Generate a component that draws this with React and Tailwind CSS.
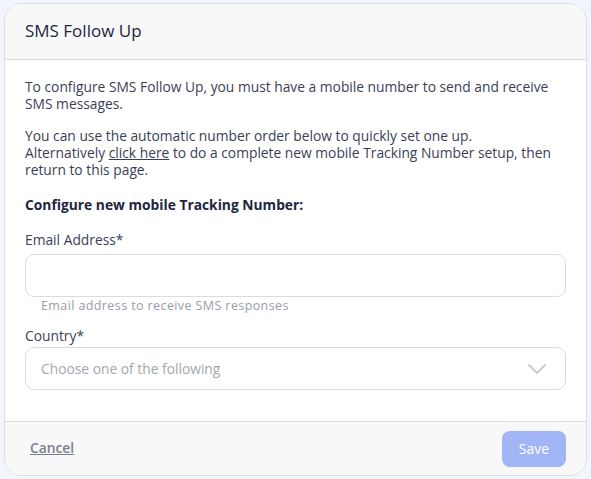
import React from "react";

function ChevronDown() {
  return (
    <svg width="20" height="12" viewBox="0 0 20 12" fill="none">
      <path d="M2 2l8 8 8-8" stroke="#c7c9cf" strokeWidth="1.8" strokeLinecap="round" strokeLinejoin="round" />
    </svg>
  );
}

export default function App() {
  return (
    <div className="w-[591px] h-[479px] bg-[#f2f5fb] pt-[3px] pl-[4px]" style={{ fontFamily: "'Open Sans', 'Liberation Sans', sans-serif" }}>
      <div className="w-[583px] h-[473px] bg-white border border-[#dedfe3] rounded-[18px] overflow-hidden flex flex-col">
        {/* Header */}
        <div className="h-[56px] bg-[#f8f8f8] border-b border-[#dcdcdf] flex items-center px-[20px] shrink-0">
          <h2 className="text-[17px] text-[#1f2540] -mt-[2px]">SMS Follow Up</h2>
        </div>

        {/* Body */}
        <div className="flex-1 px-[20px] pt-[18px] text-[13.8px] leading-[17px] text-[#3a3f55]">
          <p>To configure SMS Follow Up, you must have a mobile number to send and receive SMS messages.</p>
          <div className="mt-[15px]">
            <p>You can use the automatic number order below to quickly set one up.</p>
            <p>
              Alternatively <span className="inline-block underline">click here</span> to do a complete new mobile Tracking Number setup, then
            </p>
            <p>return to this page.</p>
          </div>
          <p className="mt-[18px] font-bold text-[#1f2540]">Configure new mobile Tracking Number:</p>

          <label className="block mt-[18px] text-[#3a3f55]">Email Address*</label>
          <div className="mt-[6px] h-[43px] border border-[#dcdcdf] rounded-[9px]" />
          <p className="mt-0 pl-[16px] text-[12.5px] text-[#9a9ca6] tracking-[0.4px]">Email address to receive SMS responses</p>

          <label className="block mt-[13px] text-[#3a3f55]">Country*</label>
          <div className="mt-[3px] h-[43px] border border-[#dcdcdf] rounded-[9px] flex items-center justify-between pl-[15px] pr-[18px]">
            <span className="text-[#a4a6ae]">Choose one of the following</span>
            <ChevronDown />
          </div>
        </div>

        {/* Footer */}
        <div className="h-[54px] bg-[#f8f8f8] border-t border-[#dcdcdf] flex items-center justify-between pl-[25px] pr-[20px] shrink-0">
          <span className="underline font-semibold text-[13.8px] text-[#7b7f8e]">Cancel</span>
          <button className="w-[64px] h-[36px] rounded-[8px] bg-[#a1b5f7] text-white text-[14px]">Save</button>
        </div>
      </div>
    </div>
  );
}
